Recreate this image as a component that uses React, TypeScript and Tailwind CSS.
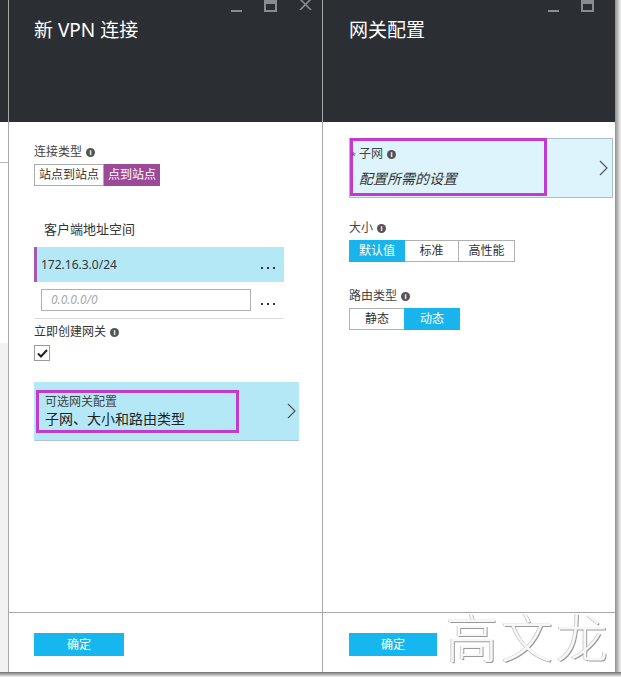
const font = { fontFamily: '"Noto Sans", "Noto Sans CJK SC", sans-serif' }

function Info() {
  return (
    <span className="inline-flex h-[9px] w-[9px] items-center justify-center rounded-full bg-[#555] text-[7px] font-bold leading-none text-white">
      i
    </span>
  )
}

function WindowControls({ close }: { close?: boolean }) {
  return (
    <div className="flex items-start gap-[22px] text-[#8a8c90]">
      <div className="mt-[10px] h-[2px] w-[11px] bg-[#8a8c90]" />
      <div className="h-[12px] w-[13px] border-2 border-t-[4px] border-[#8a8c90]" />
      {close && (
        <svg width="13" height="11" viewBox="0 0 13 11" className="-mt-[1px]">
          <path d="M1 0 L12 11 M12 0 L1 11" stroke="#8a8c90" strokeWidth="1.6" />
        </svg>
      )}
    </div>
  )
}

function Chevron() {
  return (
    <svg width="9" height="16" viewBox="0 0 9 16">
      <path d="M1 1 L8 8 L1 15" fill="none" stroke="#555" strokeWidth="1.2" />
    </svg>
  )
}

function Dots() {
  return (
    <div className="flex gap-[4px]">
      <span className="h-[2px] w-[2px] bg-[#333]" />
      <span className="h-[2px] w-[2px] bg-[#333]" />
      <span className="h-[2px] w-[2px] bg-[#333]" />
    </div>
  )
}

export default function App() {
  return (
    <div className="relative flex h-[677px] w-[621px] flex-col overflow-hidden bg-white text-[#333]" style={font}>
      <div className="flex flex-1">
        {/* left sliver of previous blade */}
        <div className="flex w-[9px] flex-col border-r border-[#a8a8a8]">
          <div className="h-[122px] bg-[#2b2e33]" />
          <div className="h-[41px] border-b border-[#b8b8b8] bg-white" />
          <div className="h-[180px] bg-white" />
          <div className="flex-1 bg-[#f2f2f2]" />
        </div>

        {/* blade: new VPN connection */}
        <div className="flex w-[313px] flex-col">
          <div className="flex h-[122px] justify-between bg-[#2b2e33] pl-[25px] pr-[10px]">
            <h1 className="pt-[17px] text-[19px] leading-[26px] text-white">新 VPN 连接</h1>
            <WindowControls close />
          </div>

          <div className="flex flex-1 flex-col pl-[25px] pt-[22px]">
            <div className="flex items-center gap-[4px] text-[12px] leading-[16px] text-[#444]">
              连接类型 <Info />
            </div>
            <div className="mt-[4px] flex h-[22px] w-fit text-[12px]">
              <div className="flex items-center border border-[#aaa] px-[4px] text-[#333]">站点到站点</div>
              <div className="flex items-center bg-[#9c4a98] px-[4px] text-white">点到站点</div>
            </div>

            <div className="ml-[10px] mt-[35px] text-[13px] leading-[16px]">客户端地址空间</div>

            <div className="mt-[10px] flex h-[35px] w-[250px] items-center justify-between border-l-[3px] border-[#a659b2] bg-[#b5e8f7] pl-[4px] pr-[9px] text-[12px]">
              <span>172.16.3.0/24</span>
              <div className="mt-[6px]"><Dots /></div>
            </div>
            <div className="mt-[7px] flex w-[250px] items-center justify-between pl-[7px] pr-[9px]">
              <div className="flex h-[22px] w-[210px] items-center border border-[#b0b0b0] px-[9px] text-[12px] italic text-[#aaa]">0.0.0.0/0</div>
              <div className="mt-[8px]"><Dots /></div>
            </div>
            <div className="mt-[7px] h-px w-[250px] bg-[#ddd]" />

            <div className="mt-[6px] flex items-center gap-[4px] text-[12px] leading-[14px] text-[#333]">
              立即创建网关 <Info />
            </div>
            <div className="mt-[6px] flex h-[16px] w-[16px] items-center justify-center border border-[#999]">
              <svg width="11" height="9" viewBox="0 0 11 9">
                <path d="M1 4.5 L4 7.5 L10 1" fill="none" stroke="#222" strokeWidth="2" />
              </svg>
            </div>

            <div className="mt-[21px] flex h-[59px] w-[265px] items-center justify-between border-b border-[#a9c8d4] bg-[#b5e8f7] pl-[2px] pr-[3px]">
              <div className="flex h-[43px] w-[203px] flex-col justify-center gap-[1px] border-[3px] border-[#c13bd0] pl-[6px]">
                <div className="text-[12px] leading-[14px] text-[#444]">可选网关配置</div>
                <div className="text-[14px] leading-[17px] text-[#222]">子网、大小和路由类型</div>
              </div>
              <Chevron />
            </div>
          </div>

          <div className="flex h-[60px] items-start border-t border-[#a8a8a8] pl-[25px] pt-[20px]">
            <button className="flex h-[23px] w-[90px] items-center justify-center bg-[#16b7ef] text-[12px] text-white">确定</button>
          </div>
        </div>

        <div className="w-px bg-[#a8a8a8]" />

        {/* blade: gateway config */}
        <div className="flex w-[292px] flex-col">
          <div className="flex h-[122px] justify-between bg-[#2b2e33] pl-[26px] pr-[21px]">
            <h1 className="pt-[17px] text-[19px] leading-[26px] text-white">网关配置</h1>
            <WindowControls />
          </div>

          <div className="flex flex-1 flex-col pl-[26px] pt-[16px]">
            <div className="relative flex h-[60px] w-[264px] items-center justify-between border border-[#a6bfcf] bg-[#ddf4fc] pr-[4px]">
              <span className="absolute left-[1px] top-[12px] z-10 text-[9px] leading-none text-[#8a3a86]">*</span>
              <div className="-mt-[2px] flex h-[58px] w-[197px] flex-col justify-center border-[3px] border-[#c13bd0] pl-[6px]">
                <div className="flex items-center gap-[4px] text-[12px] leading-[16px] text-[#444]">
                  子网 <Info />
                </div>
                <div className="mt-[8px] text-[14px] italic leading-[18px] text-[#333]">配置所需的设置</div>
              </div>
              <Chevron />
            </div>

            <div className="mt-[23px] flex items-center gap-[4px] text-[12px] leading-[14px] text-[#444]">
              大小 <Info />
            </div>
            <div className="mt-[5px] flex h-[22px] w-fit text-[12px]">
              <div className="flex w-[56px] items-center justify-center bg-[#19b4eb] text-white">默认值</div>
              <div className="flex w-[54px] items-center justify-center border border-l-0 border-[#b0b0b0]">标准</div>
              <div className="flex w-[56px] items-center justify-center border border-l-0 border-[#b0b0b0]">高性能</div>
            </div>

            <div className="mt-[27px] flex items-center gap-[4px] text-[12px] leading-[14px] text-[#444]">
              路由类型 <Info />
            </div>
            <div className="mt-[5px] flex h-[22px] w-fit text-[12px]">
              <div className="flex w-[55px] items-center justify-center border border-r-0 border-[#b0b0b0]">静态</div>
              <div className="flex w-[56px] items-center justify-center bg-[#19b4eb] text-white">动态</div>
            </div>
          </div>

          <div className="flex h-[60px] items-start border-t border-[#a8a8a8] pl-[26px] pt-[20px]">
            <button className="flex h-[23px] w-[88px] items-center justify-center bg-[#16b7ef] text-[12px] text-white">确定</button>
          </div>
        </div>

        {/* right shadow */}
        <div className="w-[6px] bg-gradient-to-r from-[#8f8f8f] to-[#f4f4f4]" />
      </div>

      {/* bottom shadow */}
      <div className="h-[5px] bg-gradient-to-b from-[#6f6f6f] to-[#f4f4f4]" />

      {/* watermark */}
      <div
        className="absolute left-[446px] top-[606px] text-[52px] leading-[60px] tracking-[3px] text-[#f7f7f7] [text-shadow:1px_1px_0_#9a9a9a,-1px_0_0_#cfcfcf]"
        style={{ fontFamily: '"Noto Sans CJK SC", sans-serif', fontWeight: 300 }}
      >
        高文龙
      </div>
    </div>
  )
}
